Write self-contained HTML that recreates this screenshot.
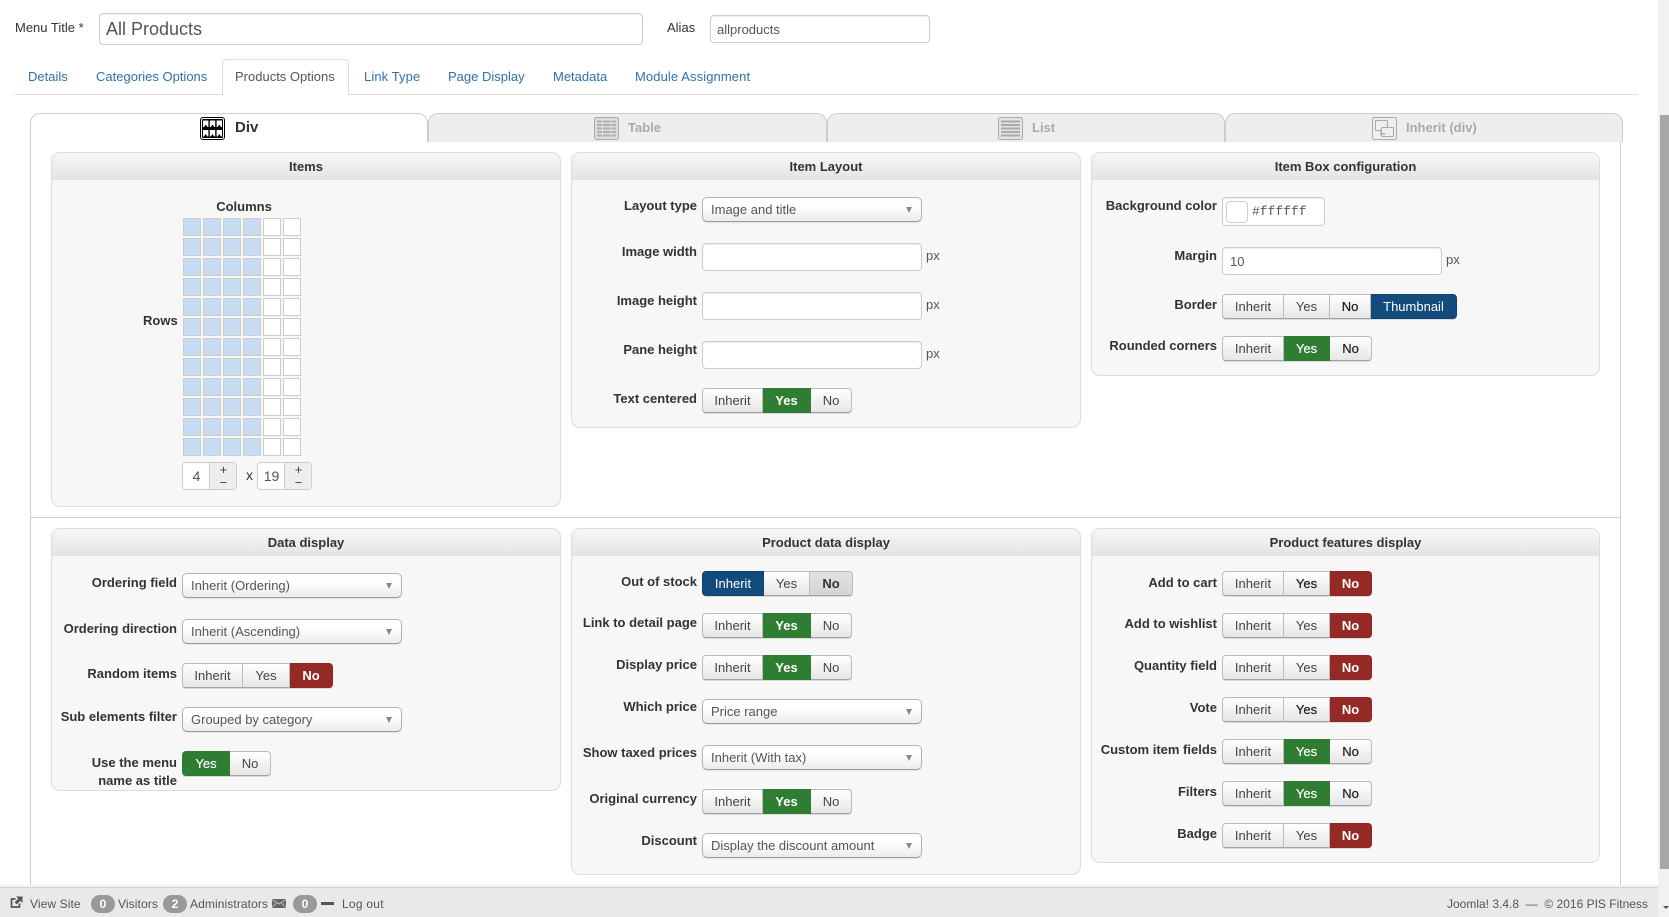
<!DOCTYPE html>
<html lang="en"><head><meta charset="utf-8"><title>All Products</title>
<style>
*{box-sizing:border-box}
html,body{margin:0;padding:0;width:1669px;height:917px;overflow:hidden;background:#fff;font:13px/18px "Liberation Sans",Arial,sans-serif;color:#333}
.a,.l1,.l2,.l3,.p,.i,.s,.g,.t,.it,.px{position:absolute}
.l1,.l2,.l3{left:0;text-align:right;font-weight:bold;height:18px;white-space:nowrap;color:#333}
.l1{width:177px}.l2{width:697px}.l3{width:1217px}
.p{border:1px solid #ddd;border-radius:9px;background:#f7f7f7;overflow:hidden}
.p b{display:block;height:27px;line-height:27px;text-align:center;background:linear-gradient(#f7f7f7,#e4e4e4);color:#333}
.i{background:#fff;border:1px solid #ccc;border-radius:4px;box-shadow:inset 0 1px 1px rgba(0,0,0,.07);color:#555;line-height:25px;padding-left:7px}
.s{height:25px;border:1px solid #b3b3b3;border-bottom-color:#999;border-radius:5px;background:linear-gradient(#fff 0,#fff 35%,#ebebeb 100%);color:#555;line-height:23px;padding-left:8px;white-space:nowrap;box-shadow:0 1px 1px rgba(0,0,0,.08)}
.s:after{content:"";position:absolute;right:9px;top:9px;border:3.5px solid transparent;border-top:6px solid #888;border-bottom:0}
.g{display:flex;height:25px;border-radius:4px;box-shadow:0 1px 0 rgba(0,0,0,.12)}
.g span{display:block;height:25px;line-height:23px;text-align:center;border:1px solid #bbb;border-left-width:0;border-bottom-color:#a2a2a2;background:linear-gradient(#fff,#e6e6e6);color:#444;white-space:nowrap}
.g span:first-child{border-left-width:1px;border-radius:4px 0 0 4px}
.g span:last-child{border-radius:0 4px 4px 0}
.g .y{background:#2f7d32;border-color:#2f7d32;color:#fff;font-weight:bold}
.g .yn{background:#2f7d32;border-color:#2f7d32;color:#fff;text-shadow:0 0 .5px #fff}
.g .r{background:#942a25;border-color:#8c2724;color:#fff;font-weight:bold}
.g .u{background:#134b7d;border-color:#10426f;color:#fff}
.g .d{color:#222;text-shadow:0 0 .6px #333}
.g .k{background:linear-gradient(#e2e2e2,#d4d4d4);color:#333;font-weight:bold}
.t{height:18px;color:#3071a9;white-space:nowrap;top:68px}
.it{top:113px;height:29px;background:#eee;border:1px solid #ccc;border-bottom:0;border-radius:10px 10px 0 0;color:#aaa}
.it em{position:absolute;top:5px;font:bold 13px/18px "Liberation Sans",sans-serif;white-space:nowrap}
.px{color:#555;height:18px}
.sp{position:absolute;width:55px;height:28px;border:1px solid #ccc;border-radius:4px;background:#fff;overflow:hidden;color:#555;font-size:14px;line-height:26px}
.sp i{position:absolute;left:0;width:27px;text-align:center;font-style:normal}
.sp u{position:absolute;left:26px;top:0;width:28px;height:26px;background:#eee;border-left:1px solid #ccc;text-decoration:none;text-align:center;color:#444;font-size:13px;line-height:13px}
.bd{position:absolute;top:895px;width:24px;height:18px;border-radius:9px;background:#999;color:#fff;font:bold 12px/18px "Liberation Sans",sans-serif;text-align:center}
.f{position:absolute;top:895px;height:18px;font-size:12px;line-height:18px;color:#555;white-space:nowrap}
</style></head>
<body>
<div class="a" style="left:15px;top:19px;white-space:nowrap">Menu Title *</div>
<div class="i" style="left:99px;top:13px;width:544px;height:32px;font-size:18px;line-height:30px;padding-left:6px">All Products</div>
<div class="a" style="left:667px;top:19px">Alias</div>
<div class="i" style="left:710px;top:15px;width:220px;height:28px;padding-left:6px;line-height:27px">allproducts</div>

<div class="a" style="left:15px;top:94px;width:1623px;height:1px;background:#ddd"></div>
<div class="a" style="left:222px;top:59px;width:127px;height:36px;background:#fff;border:1px solid #ddd;border-bottom:0;border-radius:4px 4px 0 0"></div>
<div class="t" style="left:28px">Details</div>
<div class="t" style="left:96px">Categories Options</div>
<div class="t" style="left:235px;color:#555">Products Options</div>
<div class="t" style="left:364px;letter-spacing:.1px">Link Type</div>
<div class="t" style="left:448px">Page Display</div>
<div class="t" style="left:553px">Metadata</div>
<div class="t" style="left:635px;letter-spacing:.1px">Module Assignment</div>

<!-- inner frame -->
<div class="a" style="left:30px;top:130px;width:1px;height:756px;background:#ccc"></div>
<div class="a" style="left:1620px;top:142px;width:1px;height:744px;background:#ccc"></div>
<div class="a" style="left:30px;top:517px;width:1590px;height:1px;background:#ccc"></div>

<div class="it" style="left:30px;width:398px;background:#fff;color:#333">
<svg style="position:absolute;left:169px;top:3px" width="25" height="23" viewBox="0 0 25 23"><rect x=".5" y=".5" width="24" height="22" rx="2.5" fill="#fff" stroke="#000"/><rect x="2" y="2" width="21" height="19" rx="1" fill="#000"/><g fill="#fff"><rect x="3" y="3.500" width="5.400" height="6.500"/><rect x="9.800" y="3.500" width="5.400" height="6.500"/><rect x="16.600" y="3.500" width="5.400" height="6.500"/><rect x="3" y="13" width="5.400" height="6.500"/><rect x="9.800" y="13" width="5.400" height="6.500"/><rect x="16.600" y="13" width="5.400" height="6.500"/></g><path d="M4 10l1.700-2.500L7.400 10zM10.800 10l1.700-2.500 1.700 2.500zM17.600 10l1.700-2.500L21 10zM4 19.500L5.700 17l1.700 2.500zM10.800 19.500l1.700-2.500 1.700 2.500zM17.600 19.500L19.300 17l1.700 2.500z" fill="#000"/></svg>
<em style="left:204px;font-size:15px;top:5px;color:#333">Div</em></div>

<div class="it" style="left:428px;width:399px">
<svg style="position:absolute;left:165px;top:3px" width="25" height="23" viewBox="0 0 25 23"><rect x=".5" y=".5" width="24" height="22" rx="2" fill="#ddd" stroke="#aaa"/><path d="M3 4.500h19M3 8h19M3 11.500h19M3 15h19M3 18.500h19" stroke="#b0b0b0" stroke-width="2"/><path d="M8.500 3v17M17 3v17" stroke="#ddd"/></svg>
<em style="left:199px">Table</em></div>

<div class="it" style="left:827px;width:398px">
<svg style="position:absolute;left:170px;top:3px" width="25" height="23" viewBox="0 0 25 23"><rect x=".5" y=".5" width="24" height="22" rx="2" fill="#e4e4e4" stroke="#aaa"/><path d="M3 4.500h19M3 8h19M3 11.500h19M3 15h19M3 18.500h19" stroke="#aaa" stroke-width="2"/></svg>
<em style="left:204px">List</em></div>

<div class="it" style="left:1225px;width:398px">
<svg style="position:absolute;left:146px;top:3px" width="25" height="23" viewBox="0 0 25 23" fill="none" stroke="#aaa"><rect x=".5" y=".5" width="24" height="22" rx="2"/><rect x="3.500" y="3.500" width="12" height="10" rx="1"/><rect x="9.500" y="10.500" width="12" height="9" rx="1" fill="#eee"/><path d="M9 13v4h4" stroke-width="1.500"/></svg>
<em style="left:180px">Inherit (div)</em></div>

<!-- Items -->
<div class="p" style="left:51px;top:152px;width:510px;height:355px"><b>Items</b></div>
<div class="a" style="left:144px;top:198px;width:200px;text-align:center;font-weight:bold">Columns</div>
<div class="a" style="left:143px;top:312px;font-weight:bold">Rows</div>
<svg class="a" style="left:183px;top:218px" width="120" height="240" viewBox="0 0 120 240">
<defs><pattern id="c" width="20" height="20" patternUnits="userSpaceOnUse"><rect x=".5" y=".5" width="17" height="17" fill="#c7dcf2" stroke="#ccc"/></pattern>
<pattern id="w" width="20" height="20" patternUnits="userSpaceOnUse"><rect x=".5" y=".5" width="17" height="17" fill="#fff" stroke="#ccc"/></pattern></defs>
<rect width="80" height="240" fill="url(#c)"/><rect x="80" width="40" height="240" fill="url(#w)"/></svg>
<div class="sp" style="left:182px;top:462px"><i>4</i><u>+<br>&minus;</u></div>
<div class="a" style="left:246px;top:466px;font-size:14px">x</div>
<div class="sp" style="left:257px;top:462px"><i>19</i><u>+<br>&minus;</u></div>

<!-- Item Layout -->
<div class="p" style="left:571px;top:152px;width:510px;height:276px"><b>Item Layout</b></div>
<div class="l2" style="top:197px">Layout type</div>
<div class="s" style="left:702px;top:197px;width:220px">Image and title</div>
<div class="l2" style="top:243px">Image width</div>
<div class="i" style="left:702px;top:243px;width:220px;height:28px"></div><div class="px" style="left:926px;top:247px">px</div>
<div class="l2" style="top:292px">Image height</div>
<div class="i" style="left:702px;top:292px;width:220px;height:28px"></div><div class="px" style="left:926px;top:296px">px</div>
<div class="l2" style="top:341px">Pane height</div>
<div class="i" style="left:702px;top:341px;width:220px;height:28px"></div><div class="px" style="left:926px;top:345px">px</div>
<div class="l2" style="top:390px">Text centered</div>
<div class="g" style="left:702px;top:388px"><span style="width:61px">Inherit</span><span class="y" style="width:48px">Yes</span><span style="width:41px">No</span></div>

<!-- Item Box -->
<div class="p" style="left:1091px;top:152px;width:509px;height:224px"><b>Item Box configuration</b></div>
<div class="l3" style="top:197px">Background color</div>
<div class="i" style="left:1222px;top:197px;width:103px;height:29px"></div>
<div class="a" style="left:1226px;top:201px;width:22px;height:22px;border:1px solid #ccc;border-radius:4px;background:#fff"></div>
<div class="a" style="left:1252px;top:203px;font:13px/18px 'Liberation Mono',monospace;color:#555">#ffffff</div>
<div class="l3" style="top:247px">Margin</div>
<div class="i" style="left:1222px;top:247px;width:220px;height:28px;line-height:27px">10</div><div class="px" style="left:1446px;top:251px">px</div>
<div class="l3" style="top:296px">Border</div>
<div class="g" style="left:1222px;top:294px"><span style="width:62px">Inherit</span><span style="width:46px">Yes</span><span class="d" style="width:41px">No</span><span class="u" style="width:86px">Thumbnail</span></div>
<div class="l3" style="top:337px">Rounded corners</div>
<div class="g" style="left:1222px;top:336px"><span style="width:62px">Inherit</span><span class="yn" style="width:46px">Yes</span><span class="d" style="width:42px">No</span></div>

<!-- Data display -->
<div class="p" style="left:51px;top:528px;width:510px;height:263px"><b>Data display</b></div>
<div class="l1" style="top:574px">Ordering field</div>
<div class="s" style="left:182px;top:573px;width:220px">Inherit (Ordering)</div>
<div class="l1" style="top:620px">Ordering direction</div>
<div class="s" style="left:182px;top:619px;width:220px">Inherit (Ascending)</div>
<div class="l1" style="top:665px">Random items</div>
<div class="g" style="left:182px;top:663px"><span style="width:61px">Inherit</span><span style="width:47px">Yes</span><span class="r" style="width:43px">No</span></div>
<div class="l1" style="top:708px">Sub elements filter</div>
<div class="s" style="left:182px;top:707px;width:220px">Grouped by category</div>
<div class="l1" style="top:754px">Use the menu</div>
<div class="l1" style="top:772px">name as title</div>
<div class="g" style="left:182px;top:751px"><span class="yn" style="width:48px">Yes</span><span style="width:41px">No</span></div>

<!-- Product data -->
<div class="p" style="left:571px;top:528px;width:510px;height:347px"><b>Product data display</b></div>
<div class="l2" style="top:573px">Out of stock</div>
<div class="g" style="left:702px;top:571px"><span class="u" style="width:62px">Inherit</span><span style="width:46px">Yes</span><span class="k" style="width:43px">No</span></div>
<div class="l2" style="top:614px">Link to detail page</div>
<div class="g" style="left:702px;top:613px"><span style="width:61px">Inherit</span><span class="y" style="width:48px">Yes</span><span style="width:41px">No</span></div>
<div class="l2" style="top:656px">Display price</div>
<div class="g" style="left:702px;top:655px"><span style="width:61px">Inherit</span><span class="y" style="width:48px">Yes</span><span style="width:41px">No</span></div>
<div class="l2" style="top:698px">Which price</div>
<div class="s" style="left:702px;top:699px;width:220px">Price range</div>
<div class="l2" style="top:744px">Show taxed prices</div>
<div class="s" style="left:702px;top:745px;width:220px">Inherit (With tax)</div>
<div class="l2" style="top:790px">Original currency</div>
<div class="g" style="left:702px;top:789px"><span style="width:61px">Inherit</span><span class="y" style="width:48px">Yes</span><span style="width:41px">No</span></div>
<div class="l2" style="top:832px">Discount</div>
<div class="s" style="left:702px;top:833px;width:220px">Display the discount amount</div>

<!-- Features -->
<div class="p" style="left:1091px;top:528px;width:509px;height:335px"><b>Product features display</b></div>
<div class="l3" style="top:574px">Add to cart</div>
<div class="g" style="left:1222px;top:571px"><span style="width:62px">Inherit</span><span class="d" style="width:46px">Yes</span><span class="r" style="width:42px">No</span></div>
<div class="l3" style="top:615px">Add to wishlist</div>
<div class="g" style="left:1222px;top:613px"><span style="width:62px">Inherit</span><span style="width:46px">Yes</span><span class="r" style="width:42px">No</span></div>
<div class="l3" style="top:657px">Quantity field</div>
<div class="g" style="left:1222px;top:655px"><span style="width:62px">Inherit</span><span style="width:46px">Yes</span><span class="r" style="width:42px">No</span></div>
<div class="l3" style="top:699px">Vote</div>
<div class="g" style="left:1222px;top:697px"><span style="width:62px">Inherit</span><span class="d" style="width:46px">Yes</span><span class="r" style="width:42px">No</span></div>
<div class="l3" style="top:741px">Custom item fields</div>
<div class="g" style="left:1222px;top:739px"><span style="width:62px">Inherit</span><span class="yn" style="width:46px">Yes</span><span class="d" style="width:42px">No</span></div>
<div class="l3" style="top:783px">Filters</div>
<div class="g" style="left:1222px;top:781px"><span style="width:62px">Inherit</span><span class="yn" style="width:46px">Yes</span><span class="d" style="width:42px">No</span></div>
<div class="l3" style="top:825px">Badge</div>
<div class="g" style="left:1222px;top:823px"><span style="width:62px">Inherit</span><span style="width:46px">Yes</span><span class="r" style="width:42px">No</span></div>

<!-- footer -->
<div class="a" style="left:0;top:885px;width:1658px;height:32px;background:#e9e9e9;border-top:2px solid #f1f1f1"></div>
<div class="a" style="left:0;top:887px;width:1658px;height:1px;background:#d4d4d4"></div>
<svg class="a" style="left:10px;top:896px" width="13" height="13" viewBox="0 0 13 13"><path d="M9.500 7.500v3.500h-8V3h4" fill="none" stroke="#555" stroke-width="1.700"/><path d="M6 0.500h6.500V7l-2.200-2.200L6.700 8.400 4.600 6.300l3.600-3.600z" fill="#555"/></svg>
<div class="f" style="left:30px;letter-spacing:.1px">View Site</div>
<div class="bd" style="left:91px">0</div>
<div class="f" style="left:118px;letter-spacing:.1px">Visitors</div>
<div class="bd" style="left:163px">2</div>
<div class="f" style="left:190px;letter-spacing:.1px">Administrators</div>
<svg class="a" style="left:272px;top:899px" width="14" height="9" viewBox="0 0 14 9"><rect width="14" height="9" fill="#666"/><path d="M0 .5l7 4.500 7-4.500M0 8.500l4.500-4.500M14 8.500L9.500 4" stroke="#c8c8c8" fill="none" stroke-width=".8"/></svg>
<div class="bd" style="left:293px">0</div>
<div class="a" style="left:321px;top:902px;width:13px;height:3px;background:#555"></div>
<div class="f" style="left:342px;letter-spacing:.25px">Log out</div>
<div class="f" style="left:1447px">Joomla! 3.4.8 &nbsp;&mdash;&nbsp; &copy; 2016 PIS Fitness</div>

<!-- scrollbar -->
<div class="a" style="left:1658px;top:0;width:11px;height:917px;background:#f1f1f1"></div>
<div class="a" style="left:1660px;top:115px;width:9px;height:754px;background:#a8a8a8"></div>
<div class="a" style="left:1663px;top:906px;border:3px solid transparent;border-top:3px solid #505050;border-bottom:0"></div>
</body></html>
